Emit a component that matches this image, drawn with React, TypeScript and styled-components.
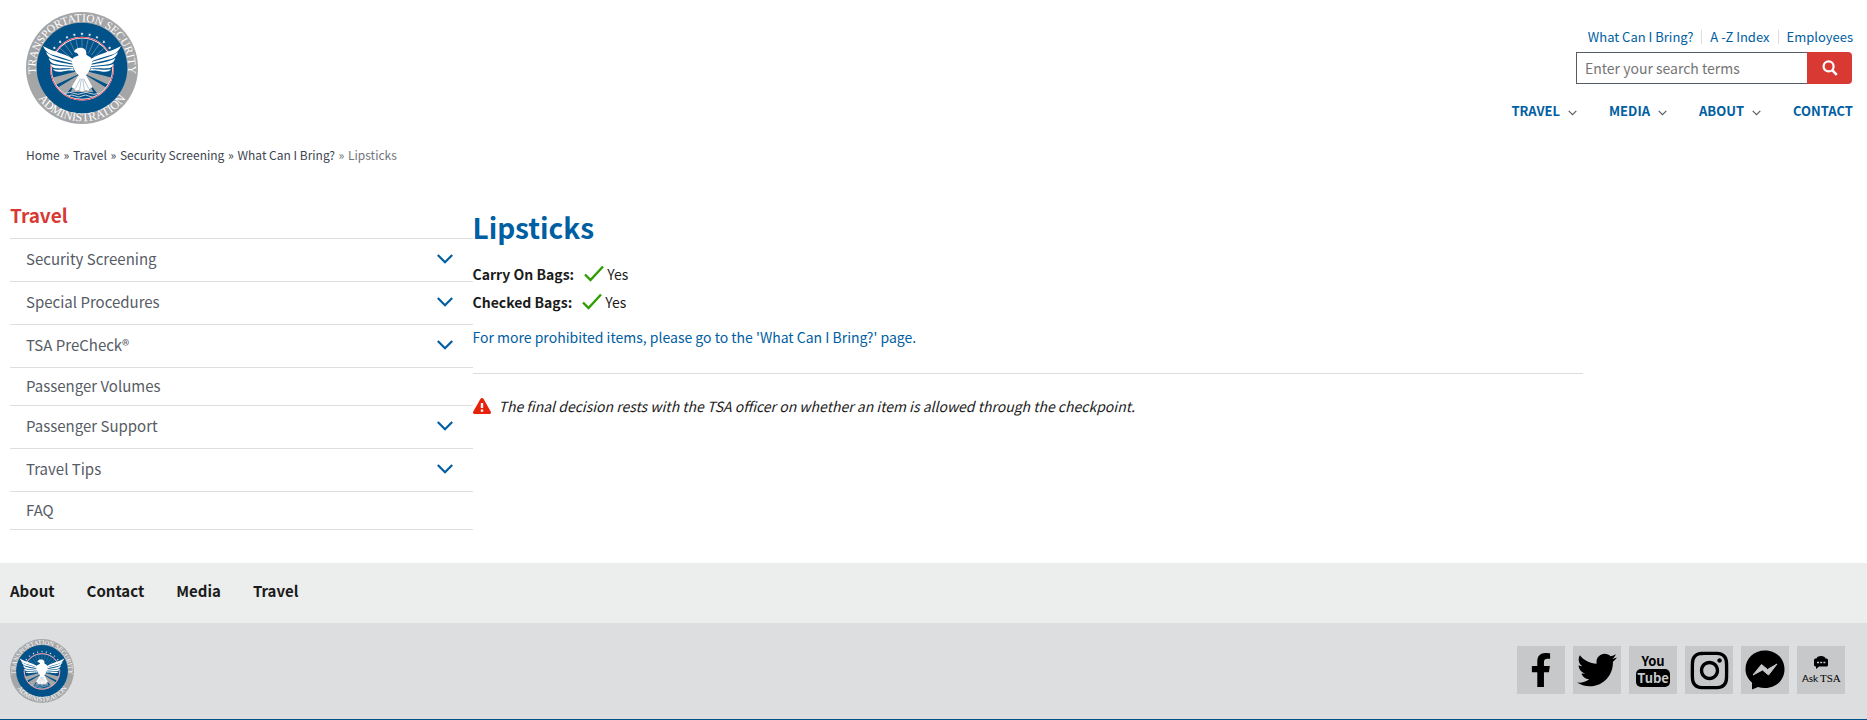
import React from "react";
import styled, { createGlobalStyle } from "styled-components";
import { FaFacebookF, FaTwitter, FaInstagram } from "react-icons/fa";

const GlobalStyle = createGlobalStyle`
  *, *::before, *::after { box-sizing: border-box; }
  body {
    margin: 0;
    background: #fff;
    color: #1b1b1b;
    font-family: "Noto Sans CJK SC", "Noto Sans", sans-serif;
    font-size: 14px;
    line-height: 20px;
  }
  a { color: inherit; text-decoration: none; }
  ul { list-style: none; margin: 0; padding: 0; }
  p, h1, h2 { margin: 0; }
`;

const Header = styled.header`
  display: flex;
  justify-content: space-between;
  align-items: flex-start;
  padding: 12px 14px 0 26px;
`;

const SealSvg = styled.svg<{ $size: number }>`
  display: block;
  overflow: visible;
  width: ${(p) => p.$size}px;
  height: ${(p) => p.$size}px;
`;

const HeaderTools = styled.div`
  display: flex;
  flex-direction: column;
  align-items: flex-end;
  padding-top: 15px;
`;

const QuickLinks = styled.ul`
  display: flex;
  align-items: center;
  height: 20px;
  color: #005ea2;
  font-size: 13px;
  line-height: 14px;
  li + li {
    margin-left: 8px;
    padding-left: 8px;
    border-left: 1px solid #dcdee0;
  }
`;

const SearchForm = styled.form`
  display: flex;
  width: 276px;
  height: 32px;
  margin: 5px 1px 0 0;
`;

const SearchInput = styled.input`
  flex: 1;
  min-width: 0;
  padding: 0 8px;
  border: 1px solid #565c65;
  border-right: 0;
  border-radius: 0;
  background: #fff;
  font: inherit;
  font-size: 14px;
  &::placeholder { color: #757575; opacity: 1; }
`;

const SearchButton = styled.button`
  display: flex;
  align-items: center;
  justify-content: center;
  width: 45px;
  padding: 0;
  border: 0;
  border-radius: 0 4px 4px 0;
  background: #d83933;
`;

const MainNav = styled.ul`
  display: flex;
  gap: 32px;
  margin-top: 17px;
  color: #005ea2;
  font-size: 13px;
  font-weight: 700;
  a { display: flex; align-items: center; gap: 8px; }
  svg { margin-top: 4px; }
`;

const Breadcrumbs = styled.nav`
  padding: 21px 26px 0;
  color: #71767a;
  font-size: 12px;
  a { color: #3d4551; }
`;

const Separator = styled.span<{ $last?: boolean }>`
  margin: 0 1px;
  color: ${(p) => (p.$last ? "#71767a" : "#3d4551")};
`;

const Columns = styled.div`
  display: flex;
  padding: 35px 7px 33px 10px;
`;

const Sidebar = styled.nav`
  flex: 0 0 25%;
`;

const SidebarTitle = styled.h2`
  height: 39px;
  border-bottom: 1px solid #dcdee0;
  color: #d83933;
  font-size: 19px;
  line-height: 30px;
`;

const SidebarItem = styled.li<{ $expandable: boolean }>`
  display: flex;
  align-items: center;
  justify-content: space-between;
  height: ${(p) => (p.$expandable ? 43 : 38)}px;
  padding: 0 20px 2px 16px;
  border-bottom: 1px solid #dcdee0;
  color: #565c65;
  font-size: 15px;
`;

const IconButton = styled.button`
  display: flex;
  padding: 0;
  border: 0;
  background: none;
`;

const Article = styled.main`
  flex: 0 0 60%;
  padding-top: 5px;
`;

const Title = styled.h1`
  color: #005ea2;
  font-size: 28px;
  line-height: 44px;
`;

const Rule = styled.hr`
  margin: 26px 0 22px;
  border: 0;
  border-top: 1px solid #dcdee0;
`;

const BagRow = styled.p`
  display: flex;
  align-items: center;
  height: 28px;
  svg { margin: 0 3px 0 10px; }
`;

const Bags = styled.div`
  padding-top: 11px;
`;

const MoreLink = styled.p`
  padding-top: 11px;
  color: #005ea2;
`;

const Notice = styled.p`
  display: flex;
  align-items: center;
  gap: 8px;
`;

const FooterNav = styled.ul`
  display: flex;
  gap: 32px;
  height: 60px;
  align-items: center;
  padding: 0 10px 4px;
  background: #eceeed;
  font-size: 15px;
  font-weight: 700;
`;

const FooterBar = styled.div`
  display: flex;
  align-items: center;
  justify-content: space-between;
  height: 97px;
  padding: 0 22px 0 10px;
  border-bottom: 1px solid #00518a;
  background: #dcdee0;
`;

const SocialList = styled.ul`
  display: flex;
  gap: 8px;
  padding-bottom: 2px;
`;

const SocialLink = styled.a`
  display: flex;
  align-items: center;
  justify-content: center;
  width: 48px;
  height: 48px;
  background: #c6c8ca;
  color: #000;
`;

const wing = (
  <g fill="#fff">
    <path d="M-20-20C-38-42-84-46-117-66C-112-54-104-46-94-41C-66-32-40-26-20-16Z" />
    <path d="M-108-48C-104-37-98-30-88-27C-66-21-44-18-24-12L-24-17C-52-26-88-32-108-48Z" />
    <path d="M-100-30C-97-20-92-14-83-12C-64-8-46-8-26-5L-26-10C-54-14-82-18-100-30Z" />
    <path d="M-95-12C-91-3-86 0-78 1C-62 2-46 0-26 2L-26-3C-50-6-76-4-95-12Z" />
    <path d="M-88 4C-80 12-72 12-62 11C-50 9-40 6-24 8L-26 3C-48 2-68 8-88 4Z" />
  </g>
);

const rays = [-72, -60, -48, -36, -24, -12, 0, 12, 24, 36, 48, 60, 72];
const stars = [-54, -40, -26, -13, 0, 13, 26, 40, 54];

function Seal({ size, id }: { size: number; id: string }) {
  return (
    <SealSvg $size={size} viewBox="-168 -168 336 336" role="img" aria-label="Transportation Security Administration">
      <defs>
        <path id={`${id}-top`} d="M-120 70A139 139 0 1 1 120 70" />
        <path id={`${id}-bottom`} d="M-160 0A160 160 0 0 0 160 0" />
        <clipPath id={`${id}-disc`}><circle cy="2" r="91" /></clipPath>
      </defs>
      <circle r="168" fill="#a5a6a8" />
      <circle r="136" fill="#005288" />
      <g fill="#fff" fontFamily='"Liberation Serif", serif' textAnchor="middle">
        <text fontSize="34"><textPath href={`#${id}-top`} startOffset="50%">TRANSPORTATION SECURITY</textPath></text>
        <text fontSize="36"><textPath href={`#${id}-bottom`} startOffset="50%">ADMINISTRATION</textPath></text>
      </g>
      {stars.map((a) => (
        <path
          key={a}
          transform={`rotate(${a}) translate(0 -103)`}
          fill="#fff"
          d="M0-5L1-1L5-1L2 1L3 5L0 3L-3 5L-2 1L-5-1L-1-1Z"
        />
      ))}
      <g clipPath={`url(#${id}-disc)`}>
        {rays.map((a) => (
          <path key={a} transform={`rotate(${a})`} d="M0-48V-88" stroke="#6f97b5" strokeWidth="2" />
        ))}
        <path d="M-14 10L-100 32V60L-14 20ZM-12 22L-88 68L-56 90L-8 26ZM14 10L100 32V60L14 20ZM12 22L88 68L56 90L8 26Z" fill="#a5a6a8" />
        <path d="M-8 22L-34 72H34L8 22Z" fill="#a5a6a8" />
        <path d="M-50 76Q-36 70-24 76T0 76T24 76T50 76M-42 84Q-30 78-20 84T0 84T20 84T42 84" fill="none" stroke="#c3d2de" strokeWidth="3" />
      </g>
      <circle cy="2" r="93" fill="none" stroke="#fff" strokeWidth="5" />
      <circle cy="2" r="94" fill="none" stroke="#e0445a" strokeWidth="3" />
      <path d="M-112-56C-94-40-60-34-30-22L-28 8C-50 6-66 14-88 4Z" fill="#005288" />
      <path d="M112-56C94-40 60-34 30-22L28 8C50 6 66 14 88 4Z" fill="#005288" />
      {wing}
      <g transform="scale(-1 1)">{wing}</g>
      <path
        d="M-24-49C-20-60-8-62 0-60C10-58 14-50 13-40C18-36 28-34 30-24C30-4 22 10 12 22L32 58L22 62L20 68L10 66L0 71L-10 66L-20 68L-22 62L-32 58L-10 22C-22 10-30-4-30-24C-26-34-16-34-10-38C-12-44-16-46-24-49Z"
        fill="#fff"
      />
      <path d="M-5 32L-20 62M-2 32L-7 66M2 32L7 66M5 32L20 62" stroke="#8fa9bd" strokeWidth="2" />
    </SealSvg>
  );
}

const SmallChevron = () => (
  <svg width="9" height="6" viewBox="0 0 9 6" aria-hidden="true">
    <path d="M.7.8L4.5 4.6L8.3.8" fill="none" stroke="#565c65" strokeWidth="1.2" />
  </svg>
);

const BigChevron = () => (
  <svg width="16" height="10" viewBox="0 0 16 10" aria-hidden="true">
    <path d="M.8 1L8 8.2L15.2 1" fill="none" stroke="#005ea2" strokeWidth="2.2" />
  </svg>
);

const Check = () => (
  <svg width="20" height="20" viewBox="0 0 20 20" aria-hidden="true">
    <path d="M1 10.5L6.5 16L19 2.5" fill="none" stroke="#2e9e00" strokeWidth="2.4" />
  </svg>
);

const Warning = () => (
  <svg width="18" height="16" viewBox="0 0 18 16" aria-hidden="true">
    <path d="M9 0C9.7 0 10.2.4 10.6 1L17.7 13.4C18.4 14.7 17.7 16 16.3 16H1.7C.3 16-.4 14.7.3 13.4L7.4 1C7.8.4 8.3 0 9 0Z" fill="#e8210c" />
    <path d="M9 5V10M9 11.6V13.8" stroke="#fff" strokeWidth="2.4" />
  </svg>
);

const SearchIcon = () => (
  <svg width="16" height="16" viewBox="0 0 16 16" aria-hidden="true">
    <circle cx="6.6" cy="6.4" r="5" fill="none" stroke="#fff" strokeWidth="2.2" />
    <path d="M10.2 10.2L14.8 14.8" stroke="#fff" strokeWidth="2.6" />
  </svg>
);

const YouTubeIcon = () => (
  <svg width="36" height="36" viewBox="0 0 36 36" aria-hidden="true">
    <g fontFamily='"Noto Sans CJK SC", sans-serif' fontWeight="700" textAnchor="middle">
      <text x="18" y="14" fontSize="13">You</text>
      <rect x="1" y="17" width="34" height="18" rx="5" />
      <text x="18" y="31" fontSize="13" fill="#c6c8ca">Tube</text>
    </g>
  </svg>
);

const MessengerIcon = () => (
  <svg width="40" height="40" viewBox="0 0 40 40" aria-hidden="true">
    <path d="M20 .5C9 .5.5 8.500.5 19.200C.5 24.600 3 29 7 32.400V39.500L13 37C15.200 37.700 17.500 38 20 38C31 38 39.500 30 39.500 19.200C39.500 8.500 31 .5 20 .5Z" />
    <path d="M8 25L16.500 14.500L22.500 19.500L32 14L23.500 25L17.500 20Z" fill="#c6c8ca" stroke="#c6c8ca" strokeLinejoin="round" />
  </svg>
);

const AskIcon = () => (
  <svg width="40" height="30" viewBox="0 0 40 30" aria-hidden="true">
    <path d="M14.500 3.500H15.500Q16 1 20 1Q24 1 24.500 3.500H25.500Q27 3.500 27 5V10Q27 11.500 25.500 11.500H18L15 14V11.500Q13 11.500 13 10V5Q13 3.500 14.500 3.500Z" />
    <path d="M16 7.500H18M19.200 7.500H21.200M22.400 7.500H24.400" stroke="#c6c8ca" strokeWidth="1.600" />
    <text x="1" y="27" fontFamily='Lato, sans-serif' fontSize="10">Ask</text>
    <text x="19" y="27" fontFamily='"Liberation Serif", serif' fontSize="11">TSA</text>
  </svg>
);

const sections = [
  { label: "Security Screening", expandable: true },
  { label: "Special Procedures", expandable: true },
  { label: "TSA PreCheck®", expandable: true },
  { label: "Passenger Volumes", expandable: false },
  { label: "Passenger Support", expandable: true },
  { label: "Travel Tips", expandable: true },
  { label: "FAQ", expandable: false },
];

const mainNav = [
  { label: "TRAVEL", menu: true },
  { label: "MEDIA", menu: true },
  { label: "ABOUT", menu: true },
  { label: "CONTACT", menu: false },
];

const socials = [
  { label: "Facebook", icon: <FaFacebookF size={34} /> },
  { label: "Twitter", icon: <FaTwitter size={40} /> },
  { label: "YouTube", icon: <YouTubeIcon /> },
  { label: "Instagram", icon: <FaInstagram size={43} /> },
  { label: "Messenger", icon: <MessengerIcon /> },
  { label: "AskTSA", icon: <AskIcon /> },
];

export default function App() {
  return (
    <>
      <GlobalStyle />
      <Header>
        <a href="#home"><Seal size={112} id="seal-header" /></a>
        <HeaderTools>
          <QuickLinks>
            {["What Can I Bring?", "A -Z Index", "Employees"].map((t) => (
              <li key={t}><a href="#quick">{t}</a></li>
            ))}
          </QuickLinks>
          <SearchForm role="search" onSubmit={(e) => e.preventDefault()}>
            <SearchInput type="search" aria-label="Enter your search terms" placeholder="Enter your search terms" />
            <SearchButton type="submit" aria-label="Search"><SearchIcon /></SearchButton>
          </SearchForm>
          <nav aria-label="Primary">
            <MainNav>
              {mainNav.map((n) => (
                <li key={n.label}><a href="#nav">{n.label}{n.menu && <SmallChevron />}</a></li>
              ))}
            </MainNav>
          </nav>
        </HeaderTools>
      </Header>
      <Breadcrumbs aria-label="Breadcrumb">
        {["Home", "Travel", "Security Screening", "What Can I Bring?"].map((t, i) => (
          <React.Fragment key={t}>
            {i > 0 && <Separator> » </Separator>}
            <a href="#crumb">{t}</a>
          </React.Fragment>
        ))}
        <Separator $last> » </Separator>Lipsticks
      </Breadcrumbs>
      <Columns>
        <Sidebar aria-label="Travel">
          <SidebarTitle>Travel</SidebarTitle>
          <ul>
            {sections.map((s) => (
              <SidebarItem key={s.label} $expandable={s.expandable}>
                <a href="#section">{s.label}</a>
                {s.expandable && <IconButton type="button" aria-label={`Expand ${s.label}`}><BigChevron /></IconButton>}
              </SidebarItem>
            ))}
          </ul>
        </Sidebar>
        <Article>
          <Title>Lipsticks</Title>
          <Bags>
            <BagRow><strong>Carry On Bags:</strong><Check />Yes</BagRow>
            <BagRow><strong>Checked Bags:</strong><Check />Yes</BagRow>
          </Bags>
          <MoreLink><a href="#bring">For more prohibited items, please go to the 'What Can I Bring?' page.</a></MoreLink>
          <Rule />
          <Notice><Warning /><em>The final decision rests with the TSA officer on whether an item is allowed through the checkpoint.</em></Notice>
        </Article>
      </Columns>
      <footer>
        <FooterNav>
          {["About", "Contact", "Media", "Travel"].map((t) => (
            <li key={t}><a href="#footer">{t}</a></li>
          ))}
        </FooterNav>
        <FooterBar>
          <a href="#home"><Seal size={64} id="seal-footer" /></a>
          <SocialList>
            {socials.map((s) => (
              <li key={s.label}><SocialLink href="#social" aria-label={s.label}>{s.icon}</SocialLink></li>
            ))}
          </SocialList>
        </FooterBar>
      </footer>
    </>
  );
}
